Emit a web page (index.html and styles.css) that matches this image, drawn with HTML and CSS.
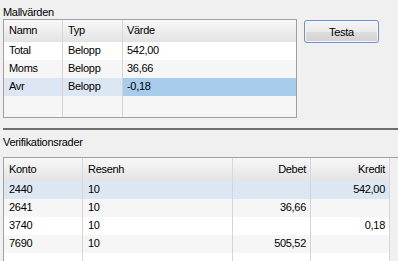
FILE: index.html
```html
<!DOCTYPE html>
<html lang="sv">
<head>
  <meta charset="UTF-8">
  <title>Mallvärden</title>
  <link rel="stylesheet" href="styles.css">
</head>
<body>
  <div class="top">
    <div class="label">Mallvärden</div>
    <div class="top-row">
      <div class="grid grid-mall">
        <div class="row head">
          <div class="cell">Namn</div>
          <div class="cell">Typ</div>
          <div class="cell">Värde</div>
        </div>
        <div class="row">
          <div class="cell">Total</div>
          <div class="cell">Belopp</div>
          <div class="cell">542,00</div>
        </div>
        <div class="row alt">
          <div class="cell">Moms</div>
          <div class="cell">Belopp</div>
          <div class="cell">36,66</div>
        </div>
        <div class="row selected">
          <div class="cell">Avr</div>
          <div class="cell">Belopp</div>
          <div class="cell current">-0,18</div>
        </div>
        <div class="row alt new-row">
          <div class="cell"></div>
          <div class="cell"></div>
          <div class="cell"></div>
        </div>
      </div>
      <button class="btn">Testa</button>
    </div>
  </div>

  <div class="splitter"></div>

  <div class="bottom">
    <div class="label">Verifikationsrader</div>
    <div class="grid grid-ver">
      <div class="row head">
        <div class="cell">Konto</div>
        <div class="cell">Resenh</div>
        <div class="cell num">Debet</div>
        <div class="cell num">Kredit</div>
      </div>
      <div class="row selected">
        <div class="cell">2440</div>
        <div class="cell">10</div>
        <div class="cell num"></div>
        <div class="cell num">542,00</div>
      </div>
      <div class="row alt">
        <div class="cell">2641</div>
        <div class="cell">10</div>
        <div class="cell num">36,66</div>
        <div class="cell num"></div>
      </div>
      <div class="row">
        <div class="cell">3740</div>
        <div class="cell">10</div>
        <div class="cell num"></div>
        <div class="cell num">0,18</div>
      </div>
      <div class="row alt">
        <div class="cell">7690</div>
        <div class="cell">10</div>
        <div class="cell num">505,52</div>
        <div class="cell num"></div>
      </div>
      <div class="row last">
        <div class="cell"></div>
        <div class="cell"></div>
        <div class="cell num"></div>
        <div class="cell num"></div>
      </div>
    </div>
  </div>
</body>
</html>
```

FILE: styles.css
```css
* {
  box-sizing: border-box;
  margin: 0;
  padding: 0;
}

html, body {
  height: 100%;
  overflow: hidden;
}

body {
  background: #f0f0f0;
  color: #000;
  font-family: 'Liberation Sans', Arial, sans-serif;
  font-size: 11px;
  letter-spacing: -0.3px;
}

.label {
  line-height: 13px;
  padding-left: 3px;
}

.top .label {
  padding-top: 6px;
}

.top-row {
  display: flex;
  align-items: flex-start;
  padding-left: 3px;
}

/* data grids */
.grid {
  border: 1px solid #a0a0a0;
  overflow: hidden;
}

.row {
  display: grid;
  height: 18px;
  line-height: 17px;
  background: #fff;
}

.row.alt {
  background: #f6f6f6;
}

.row.selected {
  background: #dce7f3;
}

.cell {
  padding: 0 4px 0 5px;
  border-right: 1px solid #d5d5d5;
  white-space: nowrap;
  overflow: hidden;
}

.cell.current {
  background: #a8cdec;
}

.cell.num {
  text-align: right;
  padding-right: 4px;
}

.row.head {
  background: linear-gradient(#f8f8f8, #e3e3e3);
}

.row.head .cell {
  border-right-color: #d8d8d8;
}

.grid-mall {
  width: 294px;
  height: 99px;
}

.grid-mall .row {
  grid-template-columns: 59px 60px 1fr;
}

.grid-mall .row.head {
  height: 22px;
  line-height: 21px;
}

.grid-mall .row .cell:last-child {
  border-right: none;
  padding-left: 4px;
}

.grid-mall .new-row {
  height: 21px;
}

.btn {
  width: 75px;
  height: 23px;
  margin: 1px 0 0 7px;
  border: 1px solid #6d8fd8;
  border-radius: 3px;
  background: linear-gradient(#f4f4f4 0%, #ececec 50%, #dedede 51%, #d2d2d2 100%);
  box-shadow: inset 0 0 0 1px #f8f8f8;
  font-family: inherit;
  font-size: 11px;
  letter-spacing: -0.3px;
  color: #000;
}

.splitter {
  height: 2px;
  margin: 10px 0 0 3px;
  background: #6e6e6e;
}

.bottom .label {
  padding-top: 6px;
}

.grid-ver {
  margin: 8px 0 0 3px;
  border-right: none;
  border-bottom: none;
  height: 104px;
}

.grid-ver .row {
  grid-template-columns: 79px 150px 78px 79px;
  width: 386px;
}

.grid-ver .row.head {
  height: 23px;
  line-height: 22px;
}

.grid-ver .row.last {
  height: 8px;
}
```
